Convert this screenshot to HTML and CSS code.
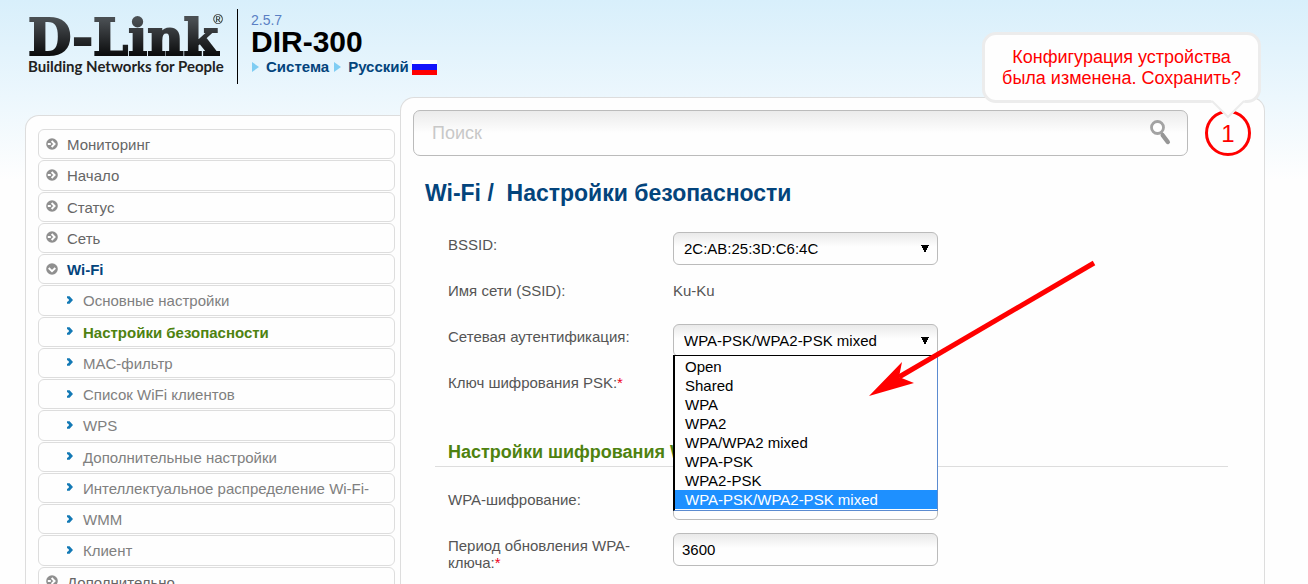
FILE: index.html
```html
<!DOCTYPE html>
<html lang="ru">
<head>
<meta charset="utf-8">
<title>D-Link DIR-300</title>
<link rel="stylesheet" href="styles.css">
</head>
<body>
<svg class="sprite" aria-hidden="true">
  <symbol id="i-closed" viewBox="0 0 12 12">
    <circle cx="6" cy="6" r="5.8" fill="#8f8f8f"/>
    <path d="M5.6 3 8.600 6 5.600 9M1.800 6h3" fill="none" stroke="#fff" stroke-width="1.9"/>
  </symbol>
  <symbol id="i-open" viewBox="0 0 12 12">
    <circle cx="6" cy="6" r="5.8" fill="#8f8f8f"/>
    <path d="M2.700 5 6 8.200 9.300 5" fill="none" stroke="#fff" stroke-width="1.9"/>
  </symbol>
  <symbol id="i-sub" viewBox="0 0 6 8">
    <path d="M0 .3h2.600L6 4 2.600 7.700H0V6L1.800 4.800V3.200L0 2z" fill="#1379b5"/>
  </symbol>
</svg>
<header class="header">
  <div class="logo">
    <div class="logo-name">D-Link<span class="logo-reg">®</span></div>
    <div class="logo-slogan">Building Networks for People</div>
  </div>
  <div class="device">
    <a class="version" href="#">2.5.7</a>
    <div class="model">DIR-300</div>
    <nav class="top-nav">
      <a href="#">Система</a>
      <a href="#">Русский <span class="flag"></span></a>
    </nav>
  </div>
</header>
<div class="layout">
  <nav class="sidebar">
    <ul class="menu">
      <li><a href="#"><svg class="ico"><use href="#i-closed"/></svg>Мониторинг</a></li>
      <li><a href="#"><svg class="ico"><use href="#i-closed"/></svg>Начало</a></li>
      <li><a href="#"><svg class="ico"><use href="#i-closed"/></svg>Статус</a></li>
      <li><a href="#"><svg class="ico"><use href="#i-closed"/></svg>Сеть</a></li>
      <li><a class="opened" href="#"><svg class="ico"><use href="#i-open"/></svg>Wi-Fi</a></li>
      <li><a class="sub" href="#"><svg class="ico-sub"><use href="#i-sub"/></svg>Основные настройки</a></li>
      <li><a class="sub current" href="#"><svg class="ico-sub"><use href="#i-sub"/></svg>Настройки безопасности</a></li>
      <li><a class="sub" href="#"><svg class="ico-sub"><use href="#i-sub"/></svg>MAC-фильтр</a></li>
      <li><a class="sub" href="#"><svg class="ico-sub"><use href="#i-sub"/></svg>Список WiFi клиентов</a></li>
      <li><a class="sub" href="#"><svg class="ico-sub"><use href="#i-sub"/></svg>WPS</a></li>
      <li><a class="sub" href="#"><svg class="ico-sub"><use href="#i-sub"/></svg>Дополнительные настройки</a></li>
      <li><a class="sub" href="#"><svg class="ico-sub"><use href="#i-sub"/></svg>Интеллектуальное распределение Wi-Fi-</a></li>
      <li><a class="sub" href="#"><svg class="ico-sub"><use href="#i-sub"/></svg>WMM</a></li>
      <li><a class="sub" href="#"><svg class="ico-sub"><use href="#i-sub"/></svg>Клиент</a></li>
      <li><a href="#"><svg class="ico"><use href="#i-closed"/></svg>Дополнительно</a></li>
    </ul>
  </nav>
  <main class="content">
    <div class="toolbar">
      <form class="search">
        <input class="search-input" type="search" placeholder="Поиск" aria-label="Поиск">
        <button class="search-button" type="button" aria-label="Найти">
          <svg width="22" height="26" viewBox="0 0 22 26">
            <circle cx="8.500" cy="7.500" r="6" fill="#fff" stroke="#a3a3a3" stroke-width="2.8"/>
            <path d="M12 12.200 13.500 14" stroke="#a3a3a3" stroke-width="2"/>
            <path d="M13.700 15.200 18.800 22" stroke="#969696" stroke-width="4.400" stroke-linecap="round"/>
          </svg>
        </button>
      </form>
      <div class="notice">
        <button class="notice-count" type="button">1</button>
        <div class="callout">
          Конфигурация устройства<br>была изменена. Сохранить?
          <svg class="callout-tail" width="36" height="19" viewBox="0 0 36 19">
            <path d="M1 -4h34v6L18 17.500 1 2z" fill="#fefefe"/>
            <path d="M0 1.500h2.500L18 17 33.500 1.500H36" fill="none" stroke="#ececec" stroke-width="2"/>
          </svg>
        </div>
      </div>
    </div>
    <h1 class="title">Wi-Fi / &nbsp;Настройки безопасности</h1>
    <form class="settings">
      <div class="row">
        <label for="bssid">BSSID:</label>
        <select class="control" id="bssid"><option>2C:AB:25:3D:C6:4C</option></select>
      </div>
      <div class="row">
        <span class="label">Имя сети (SSID):</span>
        <span class="value">Ku-Ku</span>
      </div>
      <div class="row">
        <label for="auth">Сетевая аутентификация:</label>
        <div class="dropdown">
          <select class="control" id="auth"><option>WPA-PSK/WPA2-PSK mixed</option></select>
          <ul class="options" role="listbox" aria-label="Сетевая аутентификация">
            <li role="option">Open</li>
            <li role="option">Shared</li>
            <li role="option">WPA</li>
            <li role="option">WPA2</li>
            <li role="option">WPA/WPA2 mixed</li>
            <li role="option">WPA-PSK</li>
            <li role="option">WPA2-PSK</li>
            <li role="option" aria-selected="true">WPA-PSK/WPA2-PSK mixed</li>
          </ul>
          <svg class="pointer" width="228" height="138" viewBox="0 0 228 138" aria-hidden="true">
            <path d="M225 3 30 117" stroke="#f00" stroke-width="5"/>
            <path d="M0 136 33 102 30 117 45 123z" fill="#f00"/>
          </svg>
        </div>
      </div>
      <div class="row">
        <label for="psk">Ключ шифрования PSK:<span class="required">*</span></label>
        <input class="control" id="psk" type="text">
      </div>
      <h2 class="section">Настройки шифрования WPA</h2>
      <div class="row">
        <label for="cipher">WPA-шифрование:</label>
        <select class="control" id="cipher"><option></option></select>
      </div>
      <div class="row">
        <label for="renew">Период обновления WPA-ключа:<span class="required">*</span></label>
        <input class="control" id="renew" type="text" value="3600">
      </div>
    </form>
  </main>
</div>
</body>
</html>
```

FILE: styles.css
```css
* { box-sizing: border-box; }

body {
  margin: 0;
  height: 100vh;
  overflow: hidden;
  display: flex;
  flex-direction: column;
  padding: 0 43px 0 25px;
  background: #fefefe linear-gradient(#d8effb, #ecf7fd 97px, #fefefe 180px) no-repeat;
  font: 15px/17px "Liberation Sans", Arial, sans-serif;
  color: #555;
}

a { color: inherit; text-decoration: none; }
ul { list-style: none; margin: 0; padding: 0; }
input, select, button { font: inherit; margin: 0; }
.sprite { position: absolute; width: 0; height: 0; }

/* Header */
.header { display: flex; padding-top: 9px; flex: 0 0 97px; }
.logo {
  width: 213px;
  height: 75px;
  padding-left: 3px;
  border-right: 1px solid #000;
  white-space: nowrap;
}
.logo-name {
  display: flex;
  font: bold 50px/58px "DejaVu Serif", serif;
  background: linear-gradient(#4a4f53 10px, #0c0d0e 46px);
  -webkit-background-clip: text;
  background-clip: text;
  -webkit-text-stroke: 2px transparent;
  color: transparent;
}
.logo-reg {
  margin-left: -5px;
  font: 13px/22px "Liberation Sans", sans-serif;
  -webkit-text-stroke: 0;
  color: #444;
}
.logo-slogan { margin-top: -9px; font: bold 15px/16px Lato, sans-serif; color: #222; }

.device { padding-left: 13px; display: flex; flex-direction: column; align-items: flex-start; }
.version { font-size: 14px; line-height: 22px; color: #5a7fc4; }
.model { font: bold 30px/22px "Liberation Sans", Arial, sans-serif; color: #000; }
.top-nav {
  display: flex;
  gap: 4px;
  font-weight: bold;
  line-height: 28px;
  color: #03447c;
}
.top-nav a { display: flex; align-items: center; gap: 3px; }
.top-nav a::before {
  content: "";
  border: 5px solid transparent;
  border-left: 7px solid #7fcdf3;
  border-right: 0;
  margin: 0 4px 0 1px;
}
.flag {
  width: 25px;
  height: 15px;
  background: linear-gradient(#fff 0 4px, #1212fb 4px 10px, #f00 10px);
}

/* Layout */
.layout { flex: 1; min-height: 0; display: flex; }
.sidebar {
  flex: 0 0 375px;
  margin-top: 18px;
  padding: 13px 5px 0 12px;
  border: 1px solid #ddd;
  border-width: 1px 0 0 1px;
  border-radius: 14px 0 0 0;
  background: #fefefe;
}
.menu li { padding-bottom: 1px; }
.menu a {
  display: flex;
  align-items: center;
  gap: 9px;
  padding: 5px 7px 3px;
  border: 1px solid #ddd;
  border-radius: 6px;
  line-height: 1.35;
  color: #666;
  white-space: nowrap;
}
.menu .sub { padding-left: 28px; gap: 10px; color: #808080; }
.menu .opened { font-weight: bold; color: #03447c; }
.menu .current { font-weight: bold; color: #4e8210; }
.ico { width: 12px; height: 12px; margin-bottom: 3px; }
.ico-sub { width: 6px; height: 8px; margin-bottom: 3px; }

.content {
  flex: 1;
  min-width: 0;
  padding: 12px 13px 0 12px;
  border: 1px solid #ddd;
  border-bottom: 0;
  border-radius: 14px 14px 0 0;
  background: #fefefe;
}

/* Search and notice */
.toolbar { display: flex; gap: 17px; }
.search {
  flex: 1;
  display: flex;
  align-items: center;
  height: 46px;
  padding: 0 16px 0 18px;
  border: 1px solid #bbb;
  border-radius: 7px;
  background: linear-gradient(#ebebeb, #fefefe 22px);
}
.search-input {
  flex: 1;
  padding: 0;
  border: 0;
  outline: 0;
  background: none;
  font-size: 18px;
  appearance: none;
}
.search-input::placeholder { color: #c8c8c8; }
.search-button { display: flex; padding: 0; border: 0; background: none; }

.notice { position: relative; }
.notice-count {
  width: 46px;
  height: 46px;
  padding: 0;
  border: 3px solid #f00;
  border-radius: 50%;
  background: none;
  font-size: 24px;
  color: #f00;
}
.callout {
  position: absolute;
  right: -10px;
  bottom: 53px;
  width: 279px;
  padding: 12px 0 11px;
  border: 3px solid #ececec;
  border-radius: 14px;
  background: #fefefe;
  font-size: 18px;
  line-height: 21px;
  text-align: center;
  white-space: nowrap;
  color: #f00;
}
.callout-tail { position: absolute; right: 12px; top: 100%; overflow: visible; }

/* Settings */
.title {
  margin: 24px 0 0 12px;
  font-size: 23px;
  line-height: 26px;
  color: #03447c;
}
.settings { padding: 26px 23px 0 22px; }
.row {
  display: grid;
  grid-template-columns: 200px 265px;
  column-gap: 25px;
  min-height: 33px;
  margin: 0 0 13px 13px;
}
.row label, .label, .value { padding-top: 4px; }
.required { color: #f00020; }
.control {
  display: block;
  width: 100%;
  height: 33px;
  padding: 0 8px;
  border: 1px solid #bbb;
  border-radius: 6px;
  background: linear-gradient(#e9e9e9, #fefefe 14px);
  color: #000;
}
select.control {
  appearance: none;
  padding-left: 10px;
  background:
    conic-gradient(from -27deg at 50% 100%, #000 54deg, transparent 0) right 8px center / 8px 8px no-repeat,
    linear-gradient(#e9e9e9, #fefefe 14px);
}
.dropdown { position: relative; }
.options {
  position: absolute;
  z-index: 1;
  top: 31px;
  left: 0;
  right: 0;
  padding: 1px 0;
  border: 1px solid #5b8bd0;
  border-top-color: #000;
  border-left: 2px solid #000;
  background: #fefefe;
  line-height: 19px;
  color: #000;
}
.options li { padding-left: 10px; }
.options [aria-selected="true"] { background: #1e90ff; color: #fff; }
.pointer { position: absolute; z-index: 2; left: 196px; top: -64px; }
.section {
  margin: 38px 0 20px;
  padding: 0 0 3px 13px;
  border-bottom: 1px solid #ddd;
  font-size: 18px;
  line-height: 22px;
  color: #4e8210;
}
```
